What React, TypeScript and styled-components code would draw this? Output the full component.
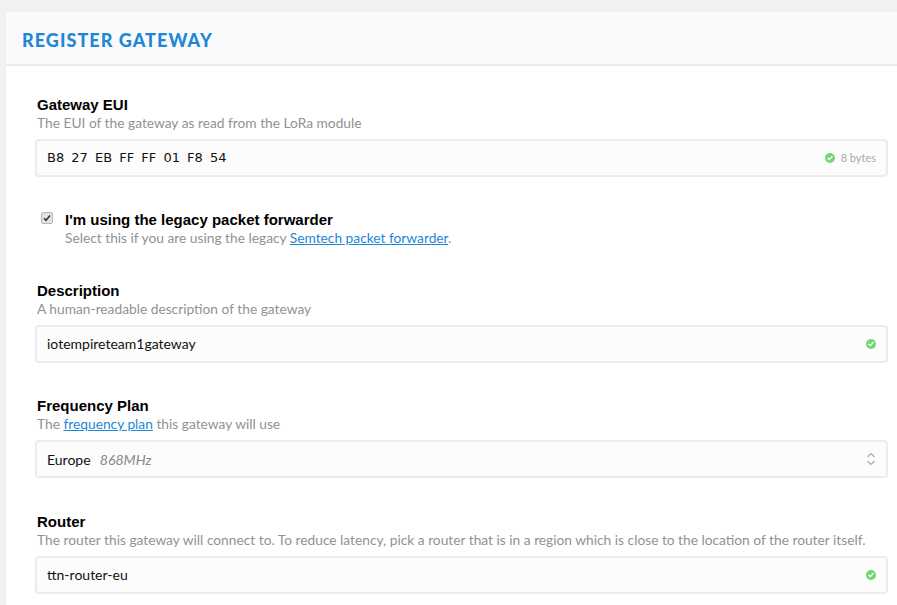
import React from "react";
import styled, { createGlobalStyle } from "styled-components";

const Global = createGlobalStyle`
  html, body { margin: 0; padding: 0; }
  body {
    background: #f1f1f1;
    font-family: Lato, "Open Sans", sans-serif;
    overflow: hidden;
  }
`;

const Page = styled.div`
  padding: 12px 0 0 6px;
  width: 897px;
  height: 605px;
  box-sizing: border-box;
  overflow: hidden;
`;

const Card = styled.section`
  width: 911px;
  min-height: 620px;
  background: #fff;
  border-radius: 4px 4px 0 0;
  overflow: hidden;
`;

const CardHeader = styled.header`
  background: #fafafa;
  padding: 19px 16px 15px;
  border-bottom: 2px solid #ebebeb;
`;

const Title = styled.h1`
  margin: 0;
  font-family: Lato, sans-serif;
  font-weight: 900;
  font-size: 18px;
  line-height: 18px;
  letter-spacing: 1.05px;
  color: #1e87d6;
`;

const Body = styled.div`
  padding: 29.5px 29px 0;
  display: flex;
  flex-direction: column;
  gap: 34.5px;
`;

const Field = styled.div`
  display: flex;
  flex-direction: column;
`;

const Label = styled.label`
  font-family: "Liberation Sans", Arial, sans-serif;
  font-weight: 700;
  font-size: 15px;
  line-height: 18px;
  color: #000;
  padding-left: 2px;
`;

const Desc = styled.div`
  font-family: Lato, sans-serif;
  font-size: 13.75px;
  line-height: 18px;
  color: #929292;
  padding-left: 2px;
`;

const Link = styled.a`
  color: #1e87d6;
  text-decoration: underline;
`;

const InputBox = styled.div`
  margin-top: 7px;
  height: 38px;
  box-sizing: border-box;
  border: 2px solid #ececec;
  border-radius: 4px;
  background: #fcfcfc;
  display: flex;
  align-items: center;
  padding: 0 10px 0 10px;
`;

const Value = styled.span<{ $mono?: boolean }>`
  flex: 1;
  font-family: ${(p) => (p.$mono ? '"DejaVu Sans", Verdana, sans-serif' : "Lato, sans-serif")};
  font-size: ${(p) => (p.$mono ? "13px" : "14px")};
  word-spacing: ${(p) => (p.$mono ? "3px" : "0")};
  color: #111;
`;

const Hint = styled.span`
  font-style: italic;
  color: #888;
  margin-left: 6px;
`;

const Status = styled.span`
  display: flex;
  align-items: center;
  gap: 6px;
  font-family: Lato, sans-serif;
  font-size: 11px;
  color: #aaa;
`;

const CheckRow = styled.div`
  display: flex;
  align-items: flex-start;
  padding-left: 6px;
  gap: 10px;
`;

const CheckBox = styled.span`
  width: 12px;
  height: 12px;
  margin-top: 1px;
  box-sizing: border-box;
  border: 1px solid #b5b5b5;
  border-radius: 2px;
  background: #e3e3e3;
  display: flex;
  align-items: center;
  justify-content: center;
`;

const CheckText = styled.div`
  display: flex;
  flex-direction: column;
`;

const Ok = () => (
  <svg width="10" height="10" viewBox="0 0 10 10">
    <circle cx="5" cy="5" r="5" fill="#6fd86f" />
    <path d="M2.8 5.2 L4.3 6.6 L7.2 3.5" stroke="#fff" strokeWidth="1.4" fill="none" strokeLinecap="round" />
  </svg>
);

const Chevrons = () => (
  <svg width="10" height="14" viewBox="0 0 10 14">
    <path d="M1.5 5 L5 1.5 L8.5 5" stroke="#aaa" strokeWidth="1.2" fill="none" />
    <path d="M1.5 9 L5 12.5 L8.5 9" stroke="#aaa" strokeWidth="1.2" fill="none" />
  </svg>
);

export default function App() {
  return (
    <>
      <Global />
      <Page>
        <Card>
          <CardHeader>
            <Title>REGISTER GATEWAY</Title>
          </CardHeader>
          <Body>
            <Field>
              <Label>Gateway EUI</Label>
              <Desc>The EUI of the gateway as read from the LoRa module</Desc>
              <InputBox>
                <Value $mono>B8 27 EB FF FF 01 F8 54</Value>
                <Status>
                  <Ok />8 bytes
                </Status>
              </InputBox>
            </Field>

            <CheckRow>
              <CheckBox>
                <svg width="8" height="8" viewBox="0 0 8 8">
                  <path d="M1 4.2 L3 6.2 L7 1.5" stroke="#333" strokeWidth="1.6" fill="none" />
                </svg>
              </CheckBox>
              <CheckText>
                <Label as="span">I'm using the legacy packet forwarder</Label>
                <Desc>
                  Select this if you are using the legacy <Link>Semtech packet forwarder</Link>.
                </Desc>
              </CheckText>
            </CheckRow>

            <Field>
              <Label>Description</Label>
              <Desc>A human-readable description of the gateway</Desc>
              <InputBox>
                <Value>iotempireteam1gateway</Value>
                <Ok />
              </InputBox>
            </Field>

            <Field>
              <Label>Frequency Plan</Label>
              <Desc>
                The <Link>frequency plan</Link> this gateway will use
              </Desc>
              <InputBox>
                <Value>
                  Europe<Hint> 868MHz</Hint>
                </Value>
                <Chevrons />
              </InputBox>
            </Field>

            <Field>
              <Label>Router</Label>
              <Desc>
                The router this gateway will connect to. To reduce latency, pick a router that is in a region which is close to the location of the router itself.
              </Desc>
              <InputBox>
                <Value>ttn-router-eu</Value>
                <Ok />
              </InputBox>
            </Field>
          </Body>
        </Card>
      </Page>
    </>
  );
}
